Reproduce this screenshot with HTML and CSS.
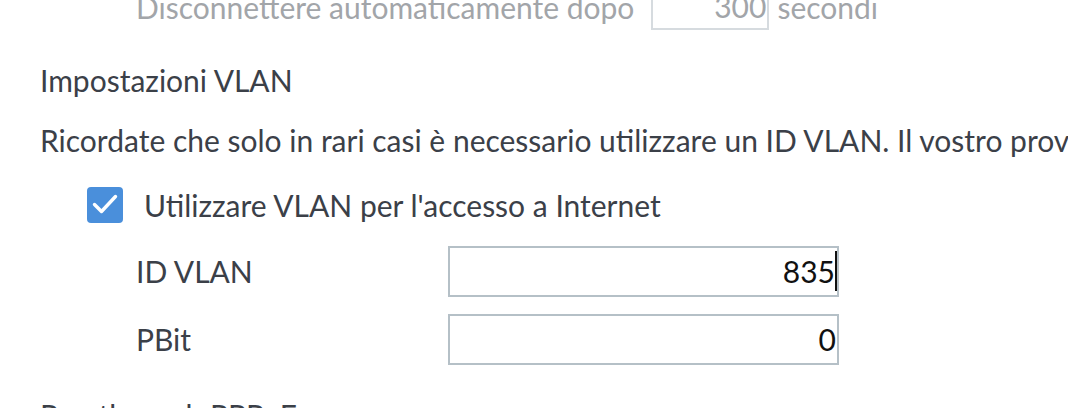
FILE: index.html
```html
<!DOCTYPE html>
<html lang="it">
<head>
<meta charset="utf-8">
<title>Impostazioni VLAN</title>
<link rel="stylesheet" href="styles.css">
</head>
<body>
<div class="page">
  <div class="row-disabled">
    <span class="dis-text">Disconnettere automaticamente dopo</span>
    <span class="small-input">300</span>
    <span class="dis-text">secondi</span>
  </div>
  <h3 class="section-title">Impostazioni VLAN</h3>
  <p class="hint">Ricordate che solo in rari casi è necessario utilizzare un ID VLAN. Il vostro provider vi comunicherà se è necessario.</p>
  <label class="check-row">
    <span class="checkbox">
      <svg viewBox="0 0 36 36" width="36" height="36"><path d="M7.5 17.5 L14.5 24.5 L28.5 9.5" fill="none" stroke="#fff" stroke-width="3.4" stroke-linecap="round" stroke-linejoin="round"/></svg>
    </span>
    <span>Utilizzare VLAN per l'accesso a Internet</span>
  </label>
  <div class="field first">
    <span class="field-label">ID VLAN</span>
    <span class="input"><span>835</span><span class="caret"></span></span>
  </div>
  <div class="field">
    <span class="field-label">PBit</span>
    <span class="input"><span class="val">0</span></span>
  </div>
  <h3 class="section-title bottom">Passthrough PPPoE</h3>
</div>
</body>
</html>
```
FILE: styles.css
```css
html, body {
  margin: 0;
  padding: 0;
  background: #fff;
  overflow: hidden;
}
.page {
  font-family: "Lato", "Open Sans", sans-serif;
  font-size: 30px;
  color: #3b4048;
  margin-top: -21px;
  padding-left: 40px;
  white-space: nowrap;
}
.row-disabled {
  display: flex;
  align-items: center;
  padding-left: 96px;
  color: #a2a5a9;
  height: 51px;
}
.dis-text {
  margin-top: 4px;
}
.small-input {
  width: 118px;
  height: 51px;
  margin: 0 8px 0 17px;
  box-sizing: border-box;
  border: 2px solid #d6dbdf;
  text-align: right;
  padding-right: 1px;
  line-height: 51px;
}
.section-title {
  font-weight: normal;
  font-size: 30px;
  margin: 20px 0 0;
  height: 60px;
  line-height: 60px;
}
.hint {
  margin: 0;
  height: 60px;
  line-height: 60px;
}
.check-row {
  display: flex;
  align-items: center;
  gap: 21px;
  margin-top: 5px;
  padding-left: 47px;
  height: 60px;
}
.checkbox {
  width: 36px;
  height: 36px;
  border-radius: 4px;
  background: #4a8fdb;
  display: flex;
}
.field {
  display: flex;
  align-items: center;
  padding-left: 96px;
  height: 68px;
}
.field.first {
  margin-top: 2px;
}
.field-label {
  width: 312px;
  color: #3b4048;
}
.input {
  width: 391px;
  height: 51px;
  box-sizing: border-box;
  border: 2px solid #b5c0c7;
  display: flex;
  align-items: center;
  justify-content: flex-end;
  color: #111;
}
.val {
  padding-right: 1px;
}
.caret {
  width: 2px;
  height: 40px;
  background: #111;
}
.section-title.bottom {
  margin-top: 12px;
}
```
